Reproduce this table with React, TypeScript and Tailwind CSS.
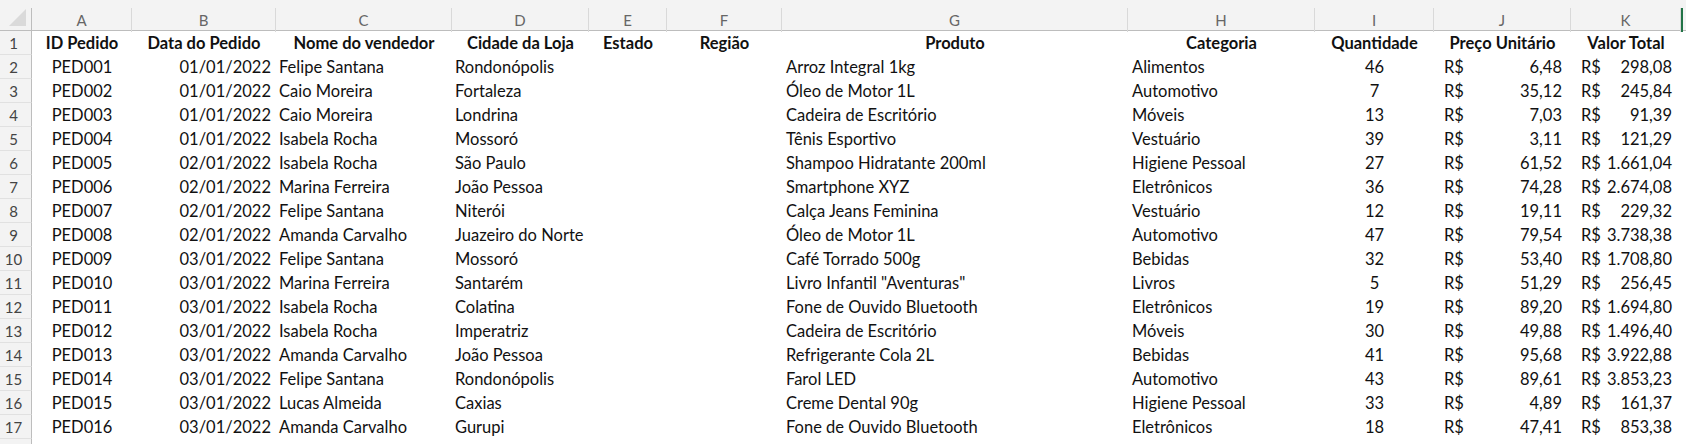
const cols = "grid-cols-[32px_100px_144px_176px_137px_78px_115px_346px_187px_119px_137px_110px_5px]"

const letters = ["A", "B", "C", "D", "E", "F", "G", "H", "I", "J", "K"]

type Row = [string, string, string, string, string, string, string, string, string]

const rows: Row[] = [
    ["PED001", "01/01/2022", "Felipe Santana", "Rondonópolis", "Arroz Integral 1kg", "Alimentos", "46", "6,48", "298,08"],
    ["PED002", "01/01/2022", "Caio Moreira", "Fortaleza", "Óleo de Motor 1L", "Automotivo", "7", "35,12", "245,84"],
    ["PED003", "01/01/2022", "Caio Moreira", "Londrina", "Cadeira de Escritório", "Móveis", "13", "7,03", "91,39"],
    ["PED004", "01/01/2022", "Isabela Rocha", "Mossoró", "Tênis Esportivo", "Vestuário", "39", "3,11", "121,29"],
    ["PED005", "02/01/2022", "Isabela Rocha", "São Paulo", "Shampoo Hidratante 200ml", "Higiene Pessoal", "27", "61,52", "1.661,04"],
    ["PED006", "02/01/2022", "Marina Ferreira", "João Pessoa", "Smartphone XYZ", "Eletrônicos", "36", "74,28", "2.674,08"],
    ["PED007", "02/01/2022", "Felipe Santana", "Niterói", "Calça Jeans Feminina", "Vestuário", "12", "19,11", "229,32"],
    ["PED008", "02/01/2022", "Amanda Carvalho", "Juazeiro do Norte", "Óleo de Motor 1L", "Automotivo", "47", "79,54", "3.738,38"],
    ["PED009", "03/01/2022", "Felipe Santana", "Mossoró", "Café Torrado 500g", "Bebidas", "32", "53,40", "1.708,80"],
    ["PED010", "03/01/2022", "Marina Ferreira", "Santarém", "Livro Infantil \"Aventuras\"", "Livros", "5", "51,29", "256,45"],
    ["PED011", "03/01/2022", "Isabela Rocha", "Colatina", "Fone de Ouvido Bluetooth", "Eletrônicos", "19", "89,20", "1.694,80"],
    ["PED012", "03/01/2022", "Isabela Rocha", "Imperatriz", "Cadeira de Escritório", "Móveis", "30", "49,88", "1.496,40"],
    ["PED013", "03/01/2022", "Amanda Carvalho", "João Pessoa", "Refrigerante Cola 2L", "Bebidas", "41", "95,68", "3.922,88"],
    ["PED014", "03/01/2022", "Felipe Santana", "Rondonópolis", "Farol LED", "Automotivo", "43", "89,61", "3.853,23"],
    ["PED015", "03/01/2022", "Lucas Almeida", "Caxias", "Creme Dental 90g", "Higiene Pessoal", "33", "4,89", "161,37"],
    ["PED016", "03/01/2022", "Amanda Carvalho", "Gurupi", "Fone de Ouvido Bluetooth", "Eletrônicos", "18", "47,41", "853,38"],
]

const headers = ["ID Pedido", "Data do Pedido", "Nome do vendedor", "Cidade da Loja", "Estado", "Região", "Produto", "Categoria", "Quantidade", "Preço Unitário", "Valor Total"]

const RowNum = ({ n }: { n?: number }) => (
    <div className="h-6 bg-[#f3f3f3] border-r border-[#bdbdbd] border-b border-b-[#e1e1e1] flex items-center justify-center text-[15px] text-[#444] pr-1">
        {n}
    </div>
)

const Money = ({ value }: { value: string }) => (
    <div className="h-6 flex items-center justify-between pl-[10px] pr-[9px] whitespace-nowrap">
        <span>R$</span>
        <span>{value}</span>
    </div>
)

export default function App() {
    return (
        <div className="w-[1686px] h-[444px] overflow-hidden bg-white text-[#111] text-[16.5px] leading-6 font-['Lato','Open_Sans',sans-serif]">
            <div className="h-2 bg-[#f3f3f3]" />

            {/* column letters */}
            <div className={`grid ${cols} h-[23px] bg-[#f3f3f3] border-b border-[#bdbdbd]`}>
                <div className="relative border-r border-[#bdbdbd]">
                    <svg width="18" height="18" viewBox="0 0 18 18" className="absolute left-[9px] top-[1px]">
                        <polygon points="17,0 17,17 0,17" fill="#dadada" />
                    </svg>
                </div>
                {letters.map((l) => (
                    <div key={l} className="flex items-center justify-center border-r border-[#d9d9d9] text-[15px] text-[#666]">
                        {l}
                    </div>
                ))}
                <div className="border-l-2 border-[#217346]" />
            </div>

            {/* header row */}
            <div className={`grid ${cols} h-6`}>
                <RowNum n={1} />
                {headers.map((h) => (
                    <div key={h} className="h-6 flex items-center justify-center font-bold whitespace-nowrap">
                        {h}
                    </div>
                ))}
                <div />
            </div>

            {rows.map((r, i) => (
                <div key={r[0]} className={`grid ${cols} h-6`}>
                    <RowNum n={i + 2} />
                    <div className="h-6 flex items-center justify-center">{r[0]}</div>
                    <div className="h-6 flex items-center justify-end pr-[5px]">{r[1]}</div>
                    <div className="h-6 flex items-center pl-[3px] whitespace-nowrap">{r[2]}</div>
                    <div className="h-6 flex items-center pl-[3px] whitespace-nowrap">{r[3]}</div>
                    <div />
                    <div />
                    <div className="h-6 flex items-center pl-1 whitespace-nowrap">{r[4]}</div>
                    <div className="h-6 flex items-center pl-1 whitespace-nowrap">{r[5]}</div>
                    <div className="h-6 flex items-center justify-center">{r[6]}</div>
                    <Money value={r[7]} />
                    <Money value={r[8]} />
                    <div />
                </div>
            ))}

            {/* top sliver of row 18 */}
            <div className={`grid ${cols} h-6`}>
                <RowNum />
            </div>
        </div>
    )
}
